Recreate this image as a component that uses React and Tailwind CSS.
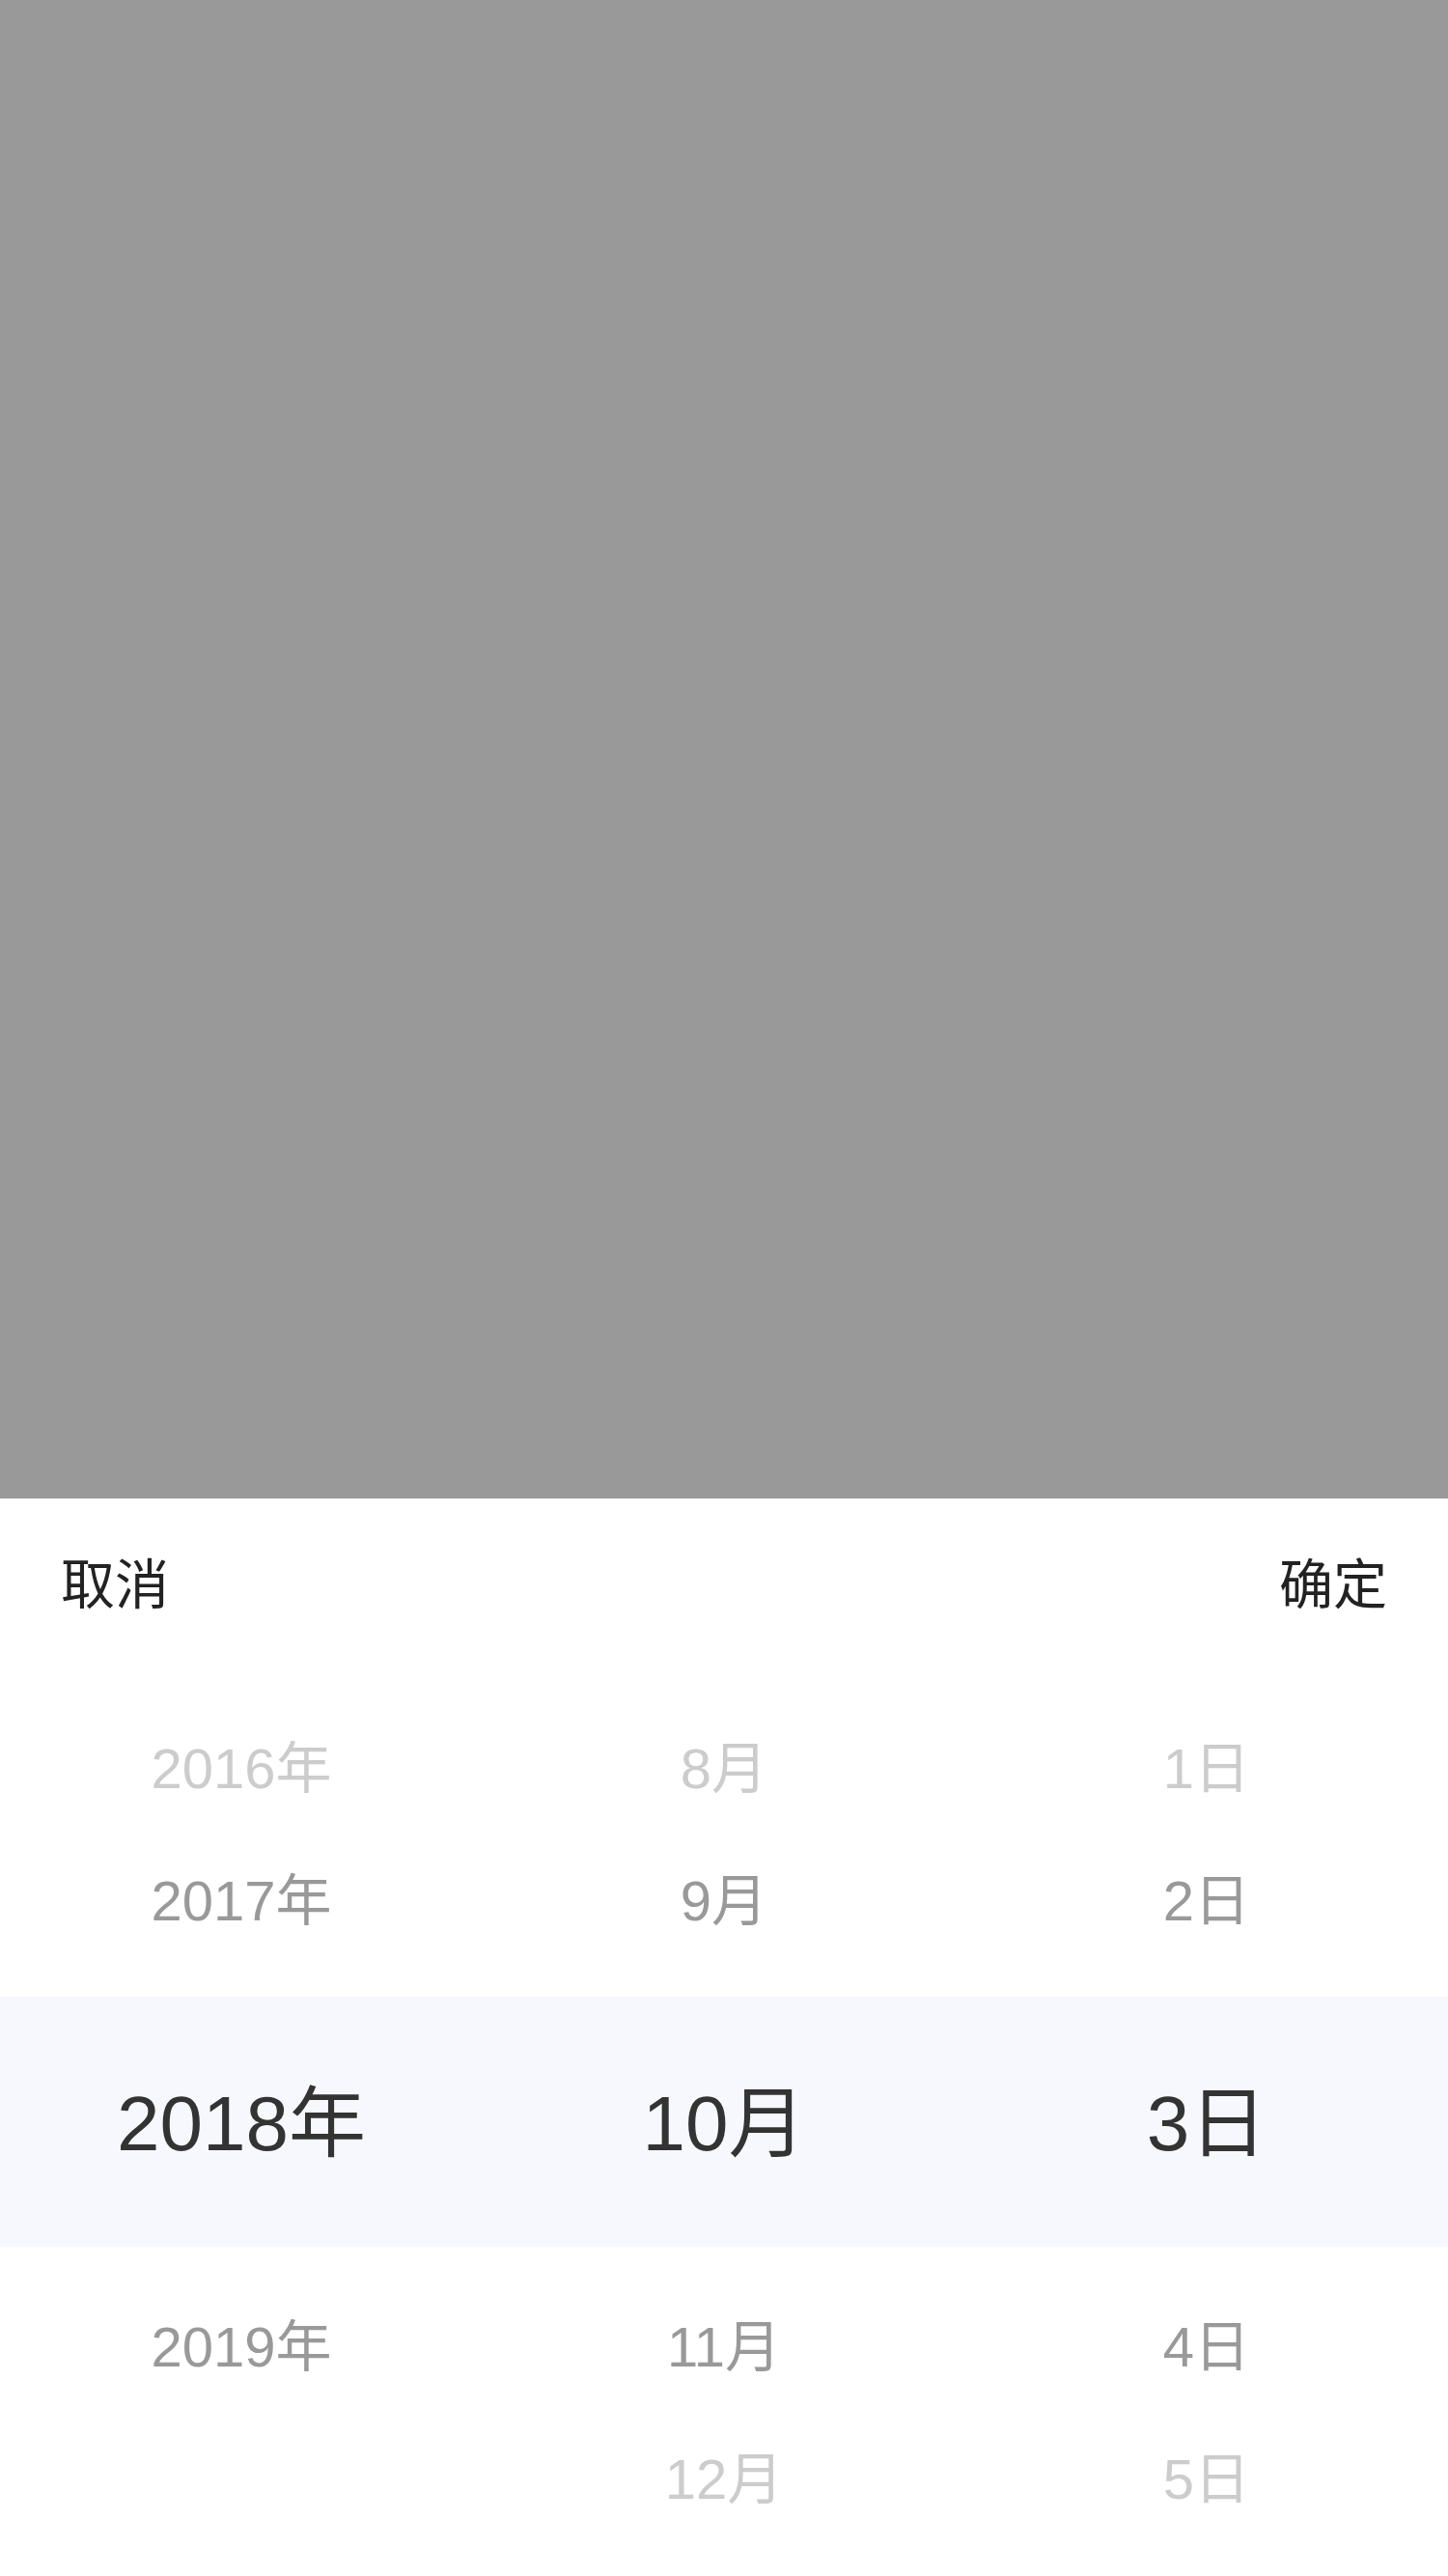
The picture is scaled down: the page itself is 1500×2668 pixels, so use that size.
import React from "react";

const font = { fontFamily: '"Liberation Sans", "Noto Sans CJK SC", sans-serif' };

const rows = [
  { cells: ["2016年", "8月", "1日"], tone: "light" },
  { cells: ["2017年", "9月", "2日"], tone: "mid" },
  { cells: ["2018年", "10月", "3日"], tone: "sel" },
  { cells: ["2019年", "11月", "4日"], tone: "mid" },
  { cells: ["", "12月", "5日"], tone: "light" },
];

function Row({ cells, tone }) {
  if (tone === "sel") {
    return (
      <div className="grid grid-cols-3 h-[259px] bg-[#f7f8fd] my-[33px]">
        {cells.map((c, i) => (
          <div key={i} className="flex items-center justify-center pt-[5px] text-[80px] text-[#333333] leading-none">
            {c}
          </div>
        ))}
      </div>
    );
  }
  const color = tone === "light" ? "text-[#cccccc]" : "text-[#999999]";
  return (
    <div className="grid grid-cols-3 h-[137px]">
      {cells.map((c, i) => (
        <div key={i} className={`flex items-center justify-center pt-[4px] text-[58px] leading-none ${color}`}>
          {c}
        </div>
      ))}
    </div>
  );
}

export default function App() {
  return (
    <div className="w-[1500px] h-[2668px] flex flex-col bg-white" style={font}>
      <div className="h-[1552px] bg-[#999999]" />
      <div className="flex-1 flex flex-col bg-white">
        <div className="h-[176px] flex items-center justify-between px-[63px] pt-[4px] text-[56px] text-[#222222] leading-none">
          <span>取消</span>
          <span>确定</span>
        </div>
        <div className="flex flex-col pt-[33px]">
          {rows.map((r, i) => (
            <Row key={i} cells={r.cells} tone={r.tone} />
          ))}
        </div>
      </div>
    </div>
  );
}
